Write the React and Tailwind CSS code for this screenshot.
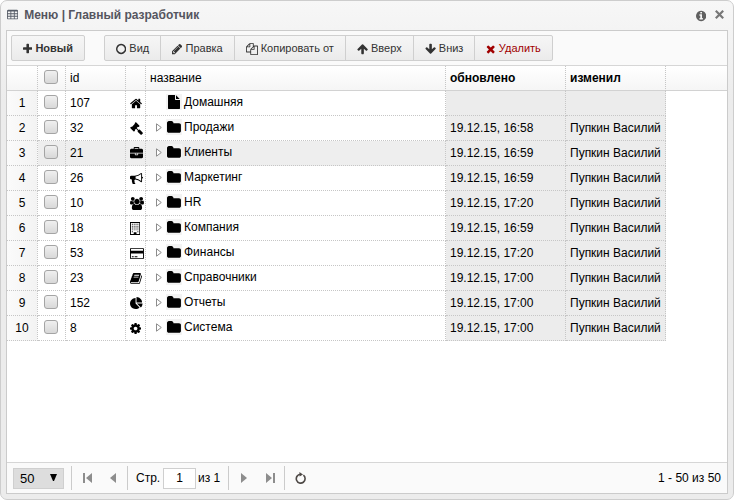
import React from 'react';

const GLYPHS = {
  home: { x: 64, w: 1664, d: 'M1472 992v480q0 26-19 45t-45 19h-384v-384h-256v384h-384q-26 0-45-19t-19-45v-480q0-1 .5-3t.5-3l575-474 575 474q1 2 1 6zm223-69l-62 74q-8 9-21 11h-3q-13 0-21-7l-692-577-692 577q-12 8-24 7-13-2-21-11l-62-74q-8-10-7-23.5t11-21.5l719-599q32-26 76-26t76 26l244 204v-195q0-14 9-23t23-9h192q14 0 23 9t9 23v408l219 182q10 8 11 21.5t-7 23.5z' },
  plus: { x: 192, w: 1408, d: 'M1600 736v192q0 40-28 68t-68 28h-416v416q0 40-28 68t-68 28h-192q-40 0-68-28t-28-68v-416h-416q-40 0-68-28t-28-68v-192q0-40 28-68t68-28h416v-416q0-40 28-68t68-28h192q40 0 68 28t28 68v416h416q40 0 68 28t28 68z' },
  folder: { x: 64, w: 1664, d: 'M1728 608v704q0 92-66 158t-158 66h-1216q-92 0-158-66t-66-158v-960q0-92 66-158t158-66h320q92 0 158 66t66 158v32h672q92 0 158 66t66 158z' },
  file: { x: 128, w: 1536, d: 'M1152 512v-472q22 14 36 28l408 408q14 14 28 36h-472zm-128 32q0 40 28 68t68 28h544v1056q0 40-28 68t-68 28h-1344q-40 0-68-28t-28-68v-1600q0-40 28-68t68-28h800v544z' },
  table: { x: 64, w: 1664, d: 'M64 288q0-66 47-113t113-47h1344q66 0 113 47t47 113v1088q0 66-47 113t-113 47h-1344q-66 0-113-47t-47-113zM192 384v256h384v-256zM704 384v256h384v-256zM1216 384v256h384v-256zM192 768v256h384v-256zM704 768v256h384v-256zM1216 768v256h384v-256zM192 1152v256h384v-256zM704 1152v256h384v-256zM1216 1152v256h384v-256z' },
  card: { x: 0, w: 1920, d: 'M1760 128q66 0 113 47t47 113v1216q0 66-47 113t-113 47h-1600q-66 0-113-47t-47-113v-1216q0-66 47-113t113-47h1600zm-1600 128q-13 0-22.5 9.5t-9.5 22.5v224h1664v-224q0-13-9.5-22.5t-22.5-9.5h-1600zm1600 1280q13 0 22.5-9.5t9.5-22.5v-608h-1664v608q0 13 9.5 22.5t22.5 9.5h1600zm-1504-128v-128h256v128h-256zm384 0v-128h384v128h-384z' },
  book: { x: 64, w: 1664, d: 'M1703 478q40 57 18 129l-275 906q-19 64-76.5 107.5t-122.5 43.5h-923q-77 0-148.5-53.5t-99.5-131.5q-24-67-2-127 0-4 3-27t4-37q1-8-3-21.5t-3-19.5q2-11 8-21t16.5-23.5 16.5-23.5q23-38 45-91.5t30-91.5q3-10 .5-30t-.5-28q3-11 17-28t17-23q21-36 42-92t25-90q1-9-2.5-32t.5-28q4-13 22-30.5t22-22.5q19-26 42.5-84.5t27.5-96.5q1-8-3-25.5t-2-26.5q2-8 9-18t18-23 17-21q8-12 16.5-30.5t15-35 16-36 19.5-32 26.5-23.5 36-11.5 47.5 5.5l-1 3q38-9 51-9h761q74 0 114 56t18 130l-274 906q-36 119-71.5 153.5t-128.5 34.5h-869q-27 0-38 15-11 16-1 43 24 70 144 70h923q29 0 56-15.5t35-41.5l300-987q7-22 5-57 38 15 59 43zm-1064 2q-4 13 2 22.5t20 9.5h608q13 0 25.5-9.5t16.5-22.5l21-64q4-13-2-22.5t-20-9.5h-608q-13 0-25.5 9.5t-16.5 22.5zm-83 256q-4 13 2 22.5t20 9.5h608q13 0 25.5-9.5t16.5-22.5l21-64q4-13-2-22.5t-20-9.5h-608q-13 0-25.5 9.5t-16.5 22.5z' },
  cog: { x: 128, w: 1536, d: 'M1152 896q0-106-75-181t-181-75-181 75-75 181 75 181 181 75 181-75 75-181zm512-109v222q0 12-8 23t-20 13l-185 28q-19 54-39 91 35 50 107 138 10 12 10 25t-9 23q-27 37-99 108t-94 71q-12 0-26-9l-138-108q-44 23-91 38-16 136-29 186-7 28-36 28h-222q-14 0-24.5-8.5t-11.5-21.5l-28-184q-49-16-90-37l-141 107q-10 9-25 9-14 0-25-11-126-114-165-168-7-10-7-23 0-12 8-23 15-21 51-66.5t54-70.5q-27-50-41-99l-183-27q-13-2-21-12.5t-8-23.5v-222q0-12 8-23t19-13l186-28q14-46 39-92-40-57-107-138-10-12-10-24 0-10 9-23 26-36 98.5-107.5t94.5-71.5q13 0 26 10l138 107q44-23 91-38 16-136 29-186 7-28 36-28h222q14 0 24.5 8.5t11.5 21.5l28 184q49 16 90 37l142-107q9-9 24-9 13 0 25 10 129 119 165 170 7 8 7 22 0 12-8 23-15 21-51 66.5t-54 70.5q26 50 41 98l183 28q13 2 21 12.5t8 23.5z' },
  pie: { x: 0, w: 1792, d: 'M768 890l546 546q-106 108-247.5 168t-298.5 60q-209 0-385.5-103t-279.5-279.5-103-385.5 103-385.5 279.5-279.5 385.5-103v762zm187 6h773q0 157-60 298.5t-168 247.5zm709-128h-768v-768q209 0 385.5 103t279.5 279.5 103 385.5z' },
  briefcase: { x: 0, w: 1792, d: 'M640 256h512v-128h-512v128zm1152 640v480q0 66-47 113t-113 47h-1472q-66 0-113-47t-47-113v-480h672v160q0 26 19 45t45 19h320q26 0 45-19t19-45v-160h672zm-768 0v128h-256v-128h256zm768-480v384h-1792v-384q0-66 47-113t113-47h352v-160q0-40 28-68t68-28h576q40 0 68 28t28 68v160h352q66 0 113 47t47 113z' },
  bullhorn: { x: 0, w: 1792, d: 'M1664 640q53 0 90.5 37.5t37.5 90.5-37.5 90.5-90.5 37.5v384q0 52-38 90t-90 38q-417-347-812-380-58 19-91 66t-31 100.5 40 92.5q-20 33-23 65.5t6 58 33.5 55 48 50 61.5 50.5q-29 58-111.5 83t-168.5 11.5-132-55.5q-7-23-29.5-87.5t-32-94.5-23-89-15-101 3.5-98.5 22-110.5h-122q-66 0-113-47t-47-113v-192q0-66 47-113t113-47h480q435 0 896-384 52 0 90 38t38 90v384zm-128 604v-954q-394 302-768 343v270q377 42 768 341z' },
  up: { x: 64, w: 1664, d: 'M1675 971q0 51-37 90l-75 75q-38 38-91 38-54 0-90-38l-294-293v704q0 52-37.5 84.5t-90.5 32.5h-128q-53 0-90.5-32.5t-37.5-84.5v-704l-294 293q-36 38-90 38t-90-38l-75-75q-38-38-38-90 0-53 38-91l651-651q35-37 90-37 54 0 91 37l651 651q37 39 37 91z' },
  pencil: { x: 128, w: 1536, d: 'M491 1536l91-91-235-235-91 91v107h128v128h107zm523-928q0-22-22-22-10 0-17 7l-542 542q-7 7-7 17 0 22 22 22 10 0 17-7l542-542q7-7 7-17zm-54-192l416 416-832 832h-416v-416zm683 96q0 53-37 90l-166 166-416-416 166-165q36-38 90-38 53 0 91 38l235 234q37 39 37 91z' },
  times: { x: 192, w: 1408, d: 'M1490 1322q0 40-28 68l-136 136q-28 28-68 28t-68-28l-294-294-294 294q-28 28-68 28t-68-28l-136-136q-28-28-28-68t28-68l294-294-294-294q-28-28-28-68t28-68l136-136q28-28 68-28t68 28l294 294 294-294q28-28 68-28t68 28l136 136q28 28 28 68t-28 68l-294 294 294 294q28 28 28 68z' },
  info: { x: 128, w: 1536, d: 'M1152 1376v-160q0-14-9-23t-23-9h-96v-512q0-14-9-23t-23-9h-320q-14 0-23 9t-9 23v160q0 14 9 23t23 9h96v320h-96q-14 0-23 9t-9 23v160q0 14 9 23t23 9h448q14 0 23-9t9-23zm-128-896v-160q0-14-9-23t-23-9h-192q-14 0-23 9t-9 23v160q0 14 9 23t23 9h192q14 0 23-9t9-23zm640 416q0 209-103 385.5t-279.5 279.5-385.5 103-385.5-103-279.5-279.5-103-385.5 103-385.5 279.5-279.5 385.5-103 385.5 103 279.5 279.5 103 385.5z' },
  circle: { x: 128, w: 1536, d: 'M896 128a768 768 0 1 0 1 0zM896 352a544 544 0 1 1-1 0z' },
  files: { x: 0, w: 1792, d: 'M1696 384q40 0 68 28t28 68v1216q0 40-28 68t-68 28h-960q-40 0-68-28t-28-68v-288h-544q-40 0-68-28t-28-68v-672q0-40 20-88t48-76l408-408q28-28 76-48t88-20h416q40 0 68 28t28 68v328q68-40 128-40h416zm-544 213l-299 299h299v-299zm-640-384l-299 299h299v-299zm196 647l316-316v-416h-384v416q0 40-28 68t-68 28h-416v640h512v-256q0-40 20-88t48-76zm956 804v-1152h-384v416q0 40-28 68t-68 28h-416v640h896z' },
  gavel: { x: 0, w: 1792, d: 'M1771 1536q0 53-37 90l-107 108q-39 37-91 37-53 0-90-37l-363-364q-38-36-38-90 0-53 43-96l-256-256-126 126q-14 14-34 14t-34-14q2 2 12.5 12t12.5 13 10 11.5 10 13.5 6 13.5 5.5 16.5 1.5 18q0 38-28 68-3 3-16.5 18t-19 20.5-18.5 16.5-22 15.5-22 9-26 4.5q-40 0-68-28l-408-408q-28-28-28-68 0-13 4.5-26t9-22 15.5-22 16.5-18.5 20.5-19 18-16.5q30-28 68-28 10 0 18 1.5t16.5 5.5 13.5 6 13.5 10 11.5 10 13 12.5 12 12.5q-14-14-14-34t14-34l348-348q14-14 34-14t34 14q-2-2-12.5-12t-12.5-13-10-11.5-10-13.5-6-13.5-5.5-16.5-1.5-18q0-38 28-68 3-3 16.5-18t19-20.5 18.5-16.5 22-15.5 22-9 26-4.5q40 0 68 28l408 408q28 28 28 68 0 13-4.5 26t-9 22-15.5 22-16.5 18.5-20.5 19-18 16.5q-30 28-68 28-10 0-18-1.5t-16.5-5.5-13.5-6-13.5-10-11.5-10-13-12.5-12-12.5q14 14 14 34t-14 34l-126 126 256 256q43-43 96-43 52 0 91 37l363 363q37 39 37 91z' },
  users: { x: 0, w: 1920, d: 'M593 896q-162 5-265 128h-134q-82 0-138-40.5t-56-118.5q0-353 124-353 6 0 43.5 21t97.5 42.5 119 21.5q67 0 133-23-5 37-5 66 0 159 90 287zm1071 637q0 120-73 189.5t-194 69.5h-874q-121 0-194-69.5t-73-189.5q0-53 3.5-103.5t14-109 26.5-108.5 43-97.5 62-81 85.5-53.5 111.5-20q10 0 43 21.5t73 48 107 48 135 21.5 135-21.5 107-48 73-48 43-21.5q61 0 111.5 20t85.5 53.5 62 81 43 97.5 26.5 108.5 14 109 3.5 103.5zm-1024-1277q0 106-75 181t-181 75-181-75-75-181 75-181 181-75 181 75 75 181zm704 384q0 159-112.5 271.5t-271.5 112.5-271.5-112.5-112.5-271.5 112.5-271.5 271.5-112.5 271.5 112.5 112.5 271.5zm576 225q0 78-56 118.5t-138 40.5h-134q-103-123-265-128 90-128 90-287 0-29-5-66 66 23 133 23 59 0 119-21.5t97.5-42.5 43.5-21q124 0 124 353zm-128-609q0 106-75 181t-181 75-181-75-75-181 75-181 181-75 181 75 75 181z' },
  building: { x: 0, w: 1408, d: 'M0 0h1408v1792h-1408zM128 128v1536h384v-256h384v256h384v-1536zM256 256h128v128h-128zM512 256h128v128h-128zM768 256h128v128h-128zM1024 256h128v128h-128zM256 512h128v128h-128zM512 512h128v128h-128zM768 512h128v128h-128zM1024 512h128v128h-128zM256 768h128v128h-128zM512 768h128v128h-128zM768 768h128v128h-128zM1024 768h128v128h-128zM256 1024h128v128h-128zM512 1024h128v128h-128zM768 1024h128v128h-128zM1024 1024h128v128h-128zM256 1280h128v128h-128zM1024 1280h128v128h-128z' },
};

function Icon({ name, size = 12, className = '' }) {
  const g = GLYPHS[name];
  return (
    <svg
      aria-hidden="true"
      className={`shrink-0 ${className}`}
      width={(size * g.w) / 1792}
      height={size}
      viewBox={`${g.x} 0 ${g.w} 1792`}
      fill="currentColor"
      fillRule="evenodd"
    >
      <path d={g.d} />
    </svg>
  );
}

const ROWS = [
  ['107', 'home', 'Домашняя', ''],
  ['32', 'gavel', 'Продажи', '19.12.15, 16:58'],
  ['21', 'briefcase', 'Клиенты', '19.12.15, 16:59'],
  ['26', 'bullhorn', 'Маркетинг', '19.12.15, 16:59'],
  ['10', 'users', 'HR', '19.12.15, 17:20'],
  ['18', 'building', 'Компания', '19.12.15, 16:59'],
  ['53', 'card', 'Финансы', '19.12.15, 17:20'],
  ['23', 'book', 'Справочники', '19.12.15, 17:00'],
  ['152', 'pie', 'Отчеты', '19.12.15, 17:00'],
  ['8', 'cog', 'Система', '19.12.15, 17:00'],
];

const ACTIONS = [
  ['circle', 'Вид'],
  ['pencil', 'Правка'],
  ['files', 'Копировать от'],
  ['up', 'Вверх'],
  ['down', 'Вниз'],
  ['times', 'Удалить'],
];

function Check({ label }) {
  return (
    <input
      type="checkbox"
      aria-label={label}
      className="ml-[6px] block size-[14px] appearance-none rounded-[3px] border border-[#a4a4a4] bg-linear-to-b from-[#f0f0f0] to-[#d8d8d8] checked:bg-[#8ab4e8]"
    />
  );
}

function Separator({ className = '' }) {
  return <span className={`h-6 w-px shrink-0 bg-[#cbcbcb] ${className}`} />;
}

function PagerButton({ label, className, children }) {
  return (
    <button type="button" aria-label={label} className={`flex h-6 items-center justify-center text-[#8d8d8d] ${className}`}>
      {children}
    </button>
  );
}

const HEAD = 'h-[25px] border-r border-b border-r-[#c6c6c6] border-b-[#d2d2d2] [border-right-style:dotted] px-1 text-left';
const CELL = 'h-[25px] border-r border-b border-dotted border-[#c6c6c6]';

function Row({ row, index }) {
  const [id, icon, name, updated] = row;
  const tint = index === 2 ? 'bg-[#eeeeee]' : 'bg-white';
  return (
    <tr>
      <td className={`${CELL} bg-linear-to-r from-[#fbfbfb] to-[#f3f3f3] text-center`}>{index + 1}</td>
      <td className={`${CELL} ${tint} pb-[2px]`}><Check label={`Выбрать ${name}`} /></td>
      <td className={`${CELL} ${tint} px-1`}>{id}</td>
      <td className={`${CELL} ${tint} pl-1`}><Icon name={icon} size={13} /></td>
      <td className={`${CELL} ${tint} pl-[10px]`}>
        <div className="flex h-6 items-center pb-[2px]">
          {index === 0 ? (
            <span className="w-[10px]" />
          ) : (
            <button type="button" aria-label={`Развернуть ${name}`} className="w-[10px]">
              <svg width="6" height="9" viewBox="0 0 6 9" fill="white" stroke="#8c8c8c"><path d="M.5 .8v7.4L5.3 4.5z" /></svg>
            </button>
          )}
          <span className="flex size-4 items-center justify-center bg-[#f3f3f3]">
            <Icon name={index === 0 ? 'file' : 'folder'} size={index === 0 ? 14 : 15} />
          </span>
          <span className="pl-[2px]">{name}</span>
        </div>
      </td>
      <td className={`${CELL} bg-[#ececec] px-1`}>{updated}</td>
      <td className={`${CELL} bg-[#ececec] px-1`}>{updated && 'Пупкин Василий'}</td>
      <td />
    </tr>
  );
}

export default function App() {
  return (
    <div className="flex min-h-screen w-full flex-col rounded-[7px] border border-[#cdcdcd] bg-linear-to-b from-[#f7f7f7] via-[#ececec] via-20% to-[#ececec] px-[5px] pb-[5px] font-['Liberation_Sans',Arial,sans-serif] text-[12px] text-black">
      <header className="flex h-[29px] items-center pr-1 pb-[2px] pl-px text-[#555b66]">
        <Icon name="table" />
        <h1 className="flex-1 pl-[6px] text-[12px] font-bold text-[#55555f]">Меню | Главный разработчик</h1>
        <button type="button" aria-label="Информация" className="mr-[9px] pt-[2px] text-[#606060]"><Icon name="info" /></button>
        <button type="button" aria-label="Закрыть" className="text-[#777777]">
          <svg width="9" height="9" viewBox="0 0 9 9" stroke="currentColor" strokeWidth="2.2"><path d="M.8 .8l7.4 7.4M8.2 .8L.8 8.2" /></svg>
        </button>
      </header>

      <main className="flex flex-1 flex-col border border-[#cbcbcb] bg-white">
        <div className="flex h-[35px] items-center border-b border-[#d6d6d6] bg-[#fafafa] px-1 pb-px text-[11px] text-[#333333]">
          <button type="button" className="mr-[19px] flex h-[26px] items-center gap-[3px] rounded-[2px] border border-[#cfcfcf] bg-linear-to-b from-[#f6f6f6] to-[#ebebeb] px-[11px] pt-[2px] font-bold">
            <Icon name="plus" />
            Новый
          </button>
          <div className="flex h-[26px] divide-x divide-[#cfcfcf] rounded-[2px] border border-[#cfcfcf] bg-linear-to-b from-[#f6f6f6] to-[#ebebeb]">
            {ACTIONS.map(([icon, label]) => (
              <button
                key={label}
                type="button"
                className={`flex items-center gap-[3px] px-[11px] pt-[2px] ${icon === 'times' ? 'text-[#a00000]' : ''}`}
              >
                <Icon name={icon === 'down' ? 'up' : icon} className={icon === 'down' ? 'rotate-180' : ''} />
                {label}
              </button>
            ))}
          </div>
        </div>

        <div className="flex-1">
          <table className="w-full table-fixed border-separate border-spacing-0">
            <colgroup>
              <col className="w-[31px]" />
              <col className="w-[28px]" />
              <col className="w-[60px]" />
              <col className="w-[20px]" />
              <col className="w-[300px]" />
              <col className="w-[120px]" />
              <col className="w-[100px]" />
              <col />
            </colgroup>
            <thead className="bg-linear-to-b from-white to-[#f5f5f5]">
              <tr>
                <th className={HEAD} />
                <th className="h-[25px] border-r border-b border-r-[#c6c6c6] border-b-[#d2d2d2] pb-[2px] [border-right-style:dotted]"><Check label="Выбрать все" /></th>
                <th className={`${HEAD} font-normal`}>id</th>
                <th className={HEAD} />
                <th className={`${HEAD} font-normal`}>название</th>
                <th className={HEAD}>обновлено</th>
                <th className={HEAD}>изменил</th>
                <th className="border-b border-[#d2d2d2]" />
              </tr>
            </thead>
            <tbody>
              {ROWS.map((row, i) => <Row key={row[0]} row={row} index={i} />)}
            </tbody>
          </table>
        </div>

        <footer className="flex h-[31px] items-center border-t border-[#d6d6d6] bg-[#fafafa] px-[6px]">
          <div className="relative">
            <select aria-label="Строк на странице" defaultValue="50" className="block h-[21px] w-[51px] appearance-none border border-[#cfcfcf] bg-[#dddddd] pl-[6px] text-[13px]">
              <option>50</option>
              <option>100</option>
            </select>
            <svg className="pointer-events-none absolute top-[6px] right-[7px]" width="7" height="7" viewBox="0 0 7 7"><path d="M0 0h7L4 7H3z" /></svg>
          </div>
          <Separator className="ml-[7px]" />
          <PagerButton label="Первая страница" className="ml-[11px] w-[9px]">
            <svg width="9" height="10" viewBox="0 0 9 10" fill="currentColor"><path d="M0 0h2v10H0zM9 0v10L3 5z" /></svg>
          </PagerButton>
          <PagerButton label="Предыдущая страница" className="ml-[18px] w-[6px]">
            <svg width="6" height="10" viewBox="0 0 6 10" fill="currentColor"><path d="M6 0v10L0 5z" /></svg>
          </PagerButton>
          <Separator className="ml-[11px]" />
          <label className="ml-2 flex items-center">
            <span className="w-[27px]">Стр.</span>
            <input type="text" defaultValue="1" className="h-[21px] w-[33px] border border-[#cfcfcf] bg-white text-center text-[12px]" />
          </label>
          <span className="w-[32px] pl-[2px] whitespace-nowrap">из 1</span>
          <Separator />
          <PagerButton label="Следующая страница" className="ml-3 w-[6px]">
            <svg width="6" height="10" viewBox="0 0 6 10" fill="currentColor"><path d="M0 0v10l6-5z" /></svg>
          </PagerButton>
          <PagerButton label="Последняя страница" className="ml-[19px] w-[9px]">
            <svg width="9" height="10" viewBox="0 0 9 10" fill="currentColor"><path d="M7 0h2v10H7zM0 0v10l6-5z" /></svg>
          </PagerButton>
          <Separator className="ml-[9px]" />
          <PagerButton label="Обновить" className="ml-[10px] w-[11px]">
            <svg width="11" height="12" viewBox="0 0 11 12" fill="none" stroke="#4d4845" strokeWidth="1.6">
              <path d="M8.4 3.2A4.4 4.4 0 1 1 5.4 2.3" />
              <path d="M4.4 0L8 2.4 4.6 4.6z" fill="#4d4845" stroke="none" />
            </svg>
          </PagerButton>
          <span className="ml-auto whitespace-nowrap">1 - 50 из 50</span>
        </footer>
      </main>
    </div>
  );
}
